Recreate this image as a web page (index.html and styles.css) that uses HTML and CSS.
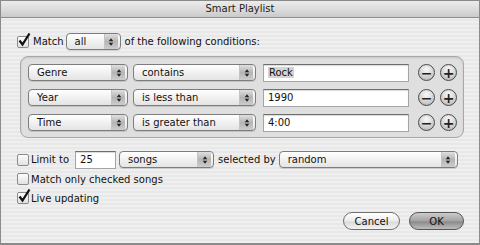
FILE: index.html
```html
<!doctype html>
<html lang="en">
   <head>
      <meta charset="UTF-8" />
      <title>Smart Playlist</title>
      <link rel="stylesheet" href="styles.css">
   </head>
   <body>
      <div class="window">
         <div class="titlebar">Smart Playlist</div>
         <div class="content">
            <div class="row match-row">
               <span class="check on"><svg viewBox="0 0 14 14"><path d="M2.5 7.5 L5.5 11.5 L12.5 0.5" /></svg></span>
               <span class="label">Match</span>
               <span class="popup w-all"><span class="val">all</span><span class="arrows"><svg viewBox="0 0 8 12"><path d="M1 5 L4 1 L7 5 Z M1 7 L4 11 L7 7 Z" /></svg></span></span>
               <span class="label">of the following conditions:</span>
            </div>

            <div class="conditions">
               <div class="cond">
                  <span class="popup w-field"><span class="val">Genre</span><span class="arrows"><svg viewBox="0 0 8 12"><path d="M1 5 L4 1 L7 5 Z M1 7 L4 11 L7 7 Z" /></svg></span></span>
                  <span class="popup w-op"><span class="val">contains</span><span class="arrows"><svg viewBox="0 0 8 12"><path d="M1 5 L4 1 L7 5 Z M1 7 L4 11 L7 7 Z" /></svg></span></span>
                  <span class="field w-value selected"><span>Rock</span></span>
                  <span class="circle">&minus;</span>
                  <span class="circle">+</span>
               </div>
               <div class="cond">
                  <span class="popup w-field"><span class="val">Year</span><span class="arrows"><svg viewBox="0 0 8 12"><path d="M1 5 L4 1 L7 5 Z M1 7 L4 11 L7 7 Z" /></svg></span></span>
                  <span class="popup w-op"><span class="val">is less than</span><span class="arrows"><svg viewBox="0 0 8 12"><path d="M1 5 L4 1 L7 5 Z M1 7 L4 11 L7 7 Z" /></svg></span></span>
                  <span class="field w-value">1990</span>
                  <span class="circle">&minus;</span>
                  <span class="circle">+</span>
               </div>
               <div class="cond">
                  <span class="popup w-field"><span class="val">Time</span><span class="arrows"><svg viewBox="0 0 8 12"><path d="M1 5 L4 1 L7 5 Z M1 7 L4 11 L7 7 Z" /></svg></span></span>
                  <span class="popup w-op"><span class="val">is greater than</span><span class="arrows"><svg viewBox="0 0 8 12"><path d="M1 5 L4 1 L7 5 Z M1 7 L4 11 L7 7 Z" /></svg></span></span>
                  <span class="field w-value">4:00</span>
                  <span class="circle">&minus;</span>
                  <span class="circle">+</span>
               </div>
            </div>

            <div class="row limit-row">
               <span class="check"></span>
               <span class="label limit-label">Limit to</span>
               <span class="field w-limit">25</span>
               <span class="popup w-unit"><span class="val">songs</span><span class="arrows"><svg viewBox="0 0 8 12"><path d="M1 5 L4 1 L7 5 Z M1 7 L4 11 L7 7 Z" /></svg></span></span>
               <span class="label">selected by</span>
               <span class="popup w-by"><span class="val">random</span><span class="arrows"><svg viewBox="0 0 8 12"><path d="M1 5 L4 1 L7 5 Z M1 7 L4 11 L7 7 Z" /></svg></span></span>
            </div>
            <div class="row opt-row">
               <span class="check"></span>
               <span class="label">Match only checked songs</span>
            </div>
            <div class="row opt-row">
               <span class="check on"><svg viewBox="0 0 14 14"><path d="M2.5 7.5 L5.5 11.5 L12.5 0.5" /></svg></span>
               <span class="label">Live updating</span>
            </div>

            <div class="buttons">
               <span class="btn">Cancel</span>
               <span class="btn default">OK</span>
            </div>
         </div>
      </div>
   </body>
</html>
```

FILE: styles.css
```css
* {
   margin: 0;
   padding: 0;
   box-sizing: border-box;
}
body {
   font-family: "DejaVu Sans", sans-serif;
   font-size: 10px;
   color: #111;
   background: #fff;
}
.window {
   width: 480px;
   height: 245px;
   border: 1px solid #8a8a8a;
   border-bottom-width: 2px;
   background: repeating-linear-gradient(#efefef 0 2px, #e8e8e8 2px 4px);
   display: flex;
   flex-direction: column;
}
.titlebar {
   height: 17px;
   line-height: 15px;
   text-align: center;
   background: linear-gradient(#ececec, #d9d9d9 60%, #cacaca);
   border-bottom: 1px solid #8c8c8c;
   color: #222;
   font-size: 10px;
}
.content {
   padding: 0 15px 0 16px;
   display: flex;
   flex-direction: column;
}
.row {
   display: flex;
   align-items: center;
   height: 17px;
}
.match-row {
   margin-top: 15px;
   gap: 2px;
}
.match-row .popup {
   margin-right: 2px;
}
.label {
   white-space: nowrap;
}
.check {
   width: 12px;
   height: 12px;
   border: 1px solid #8a8a8a;
   border-radius: 2px;
   background: linear-gradient(#fdfdfd, #e2e2e2);
   position: relative;
   flex: none;
   margin-right: 2px;
}
.check svg {
   position: absolute;
   left: -1px;
   top: -4px;
   width: 14px;
   height: 14px;
   fill: none;
   stroke: #111;
   stroke-width: 2.2;
}
.popup {
   display: flex;
   align-items: center;
   height: 17px;
   border: 1px solid #7d7d7d;
   border-radius: 4px;
   background: linear-gradient(#ffffff, #f1f1f1 50%, #e4e4e4);
   box-shadow: 0 1px 0 rgba(0, 0, 0, 0.12);
   overflow: hidden;
   flex: none;
}
.popup .val {
   flex: 1;
   padding-left: 8px;
   white-space: nowrap;
}
.popup .arrows {
   width: 14px;
   height: 100%;
   margin-right: 2px;
   display: flex;
   align-items: center;
   justify-content: center;
   background: linear-gradient(#e0e0e0, #b4b4b4 50%, #cdcdcd);
   border-left: 1px solid #c4c4c4;
}
.popup .arrows svg {
   width: 6px;
   height: 10px;
   fill: #222;
}
.w-all { width: 55px; }
.w-field { width: 100px; }
.w-op { width: 123px; }
.w-unit { width: 95px; }
.w-by { width: 179px; }
.field {
   display: flex;
   align-items: center;
   height: 18px;
   padding-left: 4px;
   background: #fff;
   border: 1px solid #a5a5a5;
   border-top-color: #6e6e6e;
   box-shadow: inset 0 1px 1px rgba(0, 0, 0, 0.15);
   flex: none;
}
.field.selected span {
   background: #d4d4d4;
   padding: 0 1px;
}
.w-value { width: 146px; }
.w-limit { width: 41px; }
.conditions {
   margin: 6px 0 0 3px;
   width: 444px;
   height: 82px;
   border: 1px solid #a8a8a8;
   border-radius: 8px;
   background: #dfdfdf;
   box-shadow: inset 0 1px 2px rgba(0, 0, 0, 0.12);
   padding: 7px 0 0 7px;
   display: flex;
   flex-direction: column;
   gap: 8px;
}
.cond {
   display: flex;
   align-items: center;
   height: 17px;
}
.cond .w-op {
   margin-left: 5px;
}
.cond .field {
   margin-left: 7px;
   margin-right: 9px;
}
.circle {
   width: 17px;
   height: 17px;
   margin-right: 5px;
   border-radius: 50%;
   border: 1px solid #4a4a4a;
   background: radial-gradient(circle at 50% 30%, #fafafa, #cfcfcf 60%, #a9a9a9);
   display: flex;
   align-items: center;
   justify-content: center;
   font-weight: bold;
   font-size: 14px;
   line-height: 1;
   color: #222;
   flex: none;
}
.limit-row {
   margin-top: 13px;
}
.limit-label {
   margin-right: 6px;
}
.limit-row .w-limit {
   margin-right: 3px;
}
.limit-row .w-unit {
   margin-right: 4px;
}
.limit-row .w-by {
   margin-left: 3px;
}
.opt-row {
   margin-top: 3px;
   height: 16px;
}
.opt-row + .opt-row {
   margin-top: 3px;
}
.buttons {
   display: flex;
   justify-content: flex-end;
   gap: 9px;
   margin-top: 6px;
}
.btn {
   display: flex;
   align-items: center;
   justify-content: center;
   height: 18px;
   border-radius: 9px;
   border: 1px solid #6f6f6f;
   background: linear-gradient(#ffffff, #ececec 50%, #dadada 55%, #f3f3f3);
   width: 57px;
}
.btn.default {
   width: 55px;
   background: linear-gradient(#cccccc, #a2a2a2 50%, #8a8a8a 55%, #bdbdbd);
   border-color: #555;
}
```
